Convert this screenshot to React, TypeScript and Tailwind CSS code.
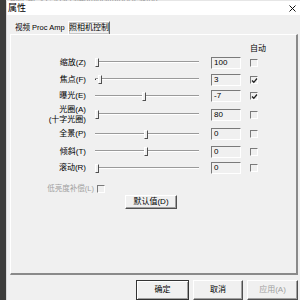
const rows = [
  { label: '缩放(Z)', pos: 2, value: '100', auto: false, h: 'h-[17px]' },
  { label: '焦点(F)', pos: 5, value: '3', auto: true, dot: true, h: 'h-[17px]' },
  { label: '曝光(E)', pos: 49, value: '-7', auto: true, h: 'h-[16px]' },
  { label: '光圈(A)', sub: '(十字光圈)', pos: 2, value: '80', auto: false, h: 'h-[21px]' },
  { label: '全景(P)', pos: 51, value: '0', auto: false, h: 'h-[18px]' },
  { label: '倾斜(T)', pos: 51, value: '0', auto: false, h: 'h-[17px]' },
  { label: '滚动(R)', pos: 2, value: '0', auto: false, h: 'h-[16px]' },
];

function CheckBox({ checked }: { checked?: boolean }) {
  return (
    <span className="relative block w-[8px] h-[8px] border-t border-l border-t-[#7a7a7a] border-l-[#7a7a7a] border-b border-r border-b-white border-r-white bg-[#f0f0f0]">
      {checked && (
        <svg className="absolute left-0 top-0" width="7" height="7" viewBox="0 0 7 7">
          <path d="M1 3.5 L2.8 5.3 L6 1.5" stroke="#222" strokeWidth="1.3" fill="none" />
        </svg>
      )}
    </span>
  );
}

function Slider({ pos, dot }: { pos: number; dot?: boolean }) {
  return (
    <div className="relative w-[108px] h-[15px]">
      <div className="absolute left-[2px] right-[2px] top-[6px] h-[2px] border-t border-t-[#9a9a9a] border-b border-b-white" />
      {dot && <div className="absolute left-[2px] top-[7px] w-[1px] h-[1px] bg-[#333]" />}
      <div
        className="absolute top-[3px] w-[4px] h-[9px] bg-[#f0f0f0] border-l border-l-white border-r border-r-[#505050] border-b border-b-[#505050] border-t border-t-white"
        style={{ left: pos }}
      />
    </div>
  );
}

function Edit({ value }: { value: string }) {
  return (
    <div className="w-[30px] h-[12px] border-t border-l border-t-[#7a7a7a] border-l-[#7a7a7a] border-b border-r border-b-white border-r-white bg-[#f0f0f0] pl-[2px] text-[8px] leading-[10px] text-black">
      {value}
    </div>
  );
}

export default function App() {
  return (
    <div
      className="w-[300px] h-[300px] overflow-hidden bg-[#3d3d3b] flex flex-col text-black"
      style={{ fontFamily: '"Liberation Sans", "Noto Sans CJK SC", sans-serif' }}
    >
      <div className="h-[4px] ml-[6px] bg-[#e6e6e6] overflow-hidden">
        <div className="-mt-[5px] pl-[4px] text-[8px] leading-[9px] text-[#9a9a9a] whitespace-nowrap">
          AMCAP - C:\Users\Administrator\Desktop
        </div>
      </div>
      <div className="flex-1 ml-[6px] flex flex-col bg-[#f0f0f0] border-l border-l-[#d8d8d8]">
        <div className="h-[14px] bg-white flex items-center justify-between pl-[1px] pr-[4px]">
          <span className="text-[9px] leading-[10px]">属性</span>
          <svg width="7" height="7" viewBox="0 0 7 7">
            <path d="M0.5 0.5 L6.5 6.5 M6.5 0.5 L0.5 6.5" stroke="#111" strokeWidth="1" />
          </svg>
        </div>

        <div className="flex items-end h-[19px] pl-[8px]">
          <div className="h-[12px] flex items-center text-[7.5px] leading-[10px] w-[53px] whitespace-nowrap">视频 Proc Amp</div>
          <div className="h-[13px] w-[42px] flex items-center justify-center text-[8px] leading-[10px] whitespace-nowrap border-t border-l border-t-white border-l-white border-r border-r-[#6a6a6a] bg-[#f0f0f0] shadow-[inset_0_0_0_1px_#c8c8c8]">
            照相机控制
          </div>
        </div>

        <div className="ml-[3px] mr-[2px] h-[241px] border-t border-l border-t-white border-l-white border-r-2 border-b-2 border-r-[#8a8a8a] border-b-[#8a8a8a] flex flex-col">
          <div className="h-[19px] flex items-end">
            <span className="ml-[239px] text-[8px] leading-[10px]">自动</span>
          </div>
          {rows.map((r) => (
            <div key={r.label} className={`${r.h} flex items-center`}>
              <div className="w-[75px] text-right text-[8px] leading-[10px] whitespace-nowrap">
                <div>{r.label}</div>
                {r.sub && <div>{r.sub}</div>}
              </div>
              <div className="ml-[7px]">
                <Slider pos={r.pos} dot={r.dot} />
              </div>
              <div className="ml-[10px]">
                <Edit value={r.value} />
              </div>
              <div className="ml-[9px]">
                <CheckBox checked={r.auto} />
              </div>
            </div>
          ))}
          <div className="mt-[8px] h-[10px] flex items-center">
            <span className="w-[83px] text-right text-[7.5px] leading-[10px] text-[#a0a0a0] whitespace-nowrap">低亮度补偿(L)</span>
            <span className="ml-[3px]">
              <CheckBox />
            </span>
          </div>
          <div className="mt-[1px] pl-[114px]">
            <div className="w-[52px] h-[14px] flex items-center justify-center text-[8px] leading-[10px] border-t border-l border-t-white border-l-white border-r border-b border-r-[#505050] border-b-[#505050] shadow-[inset_-1px_-1px_0_#a0a0a0]">
              默认值(D)
            </div>
          </div>
        </div>

        <div className="flex justify-end gap-[4px] pr-[2px] pt-[5px]">
          <div className="w-[53px] h-[20px] flex items-center justify-center text-[8px] border border-[#333] shadow-[inset_1px_1px_0_white,inset_-1px_-1px_0_#a0a0a0]">
            确定
          </div>
          <div className="w-[50px] h-[20px] flex items-center justify-center text-[8px] border-t border-l border-t-white border-l-white border-r border-b border-r-[#505050] border-b-[#505050] shadow-[inset_-1px_-1px_0_#a0a0a0]">
            取消
          </div>
          <div className="w-[51px] h-[20px] flex items-center justify-center text-[8px] text-[#a0a0a0] border-t border-l border-t-white border-l-white border-r border-b border-r-[#505050] border-b-[#505050] shadow-[inset_-1px_-1px_0_#a0a0a0]">
            应用(A)
          </div>
        </div>
      </div>
    </div>
  );
}
